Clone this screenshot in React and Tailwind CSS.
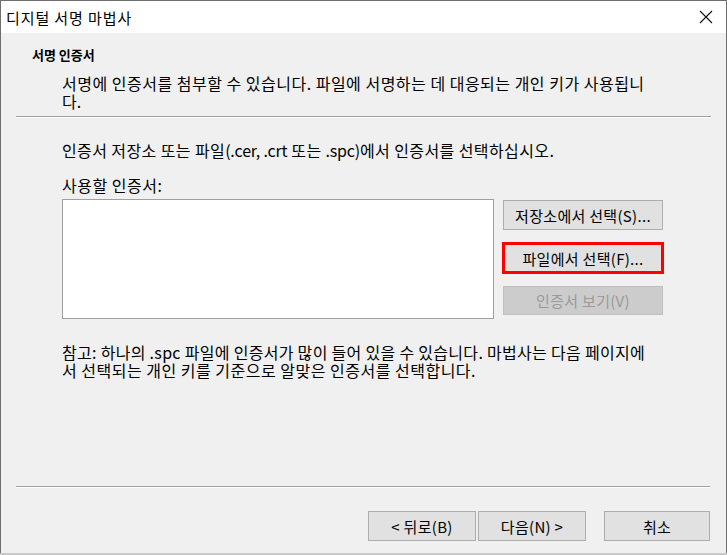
import React from 'react';

const font = { fontFamily: '"Noto Sans CJK KR", "Noto Sans", sans-serif' };

const WinButton = ({ children, disabled, className = '' }) => (
  <button
    disabled={disabled}
    className={`flex items-center justify-center border text-[15px] tracking-[0.3px] leading-none ${
      disabled
        ? 'bg-[#cccccc] border-[#bfbfbf] text-[#9a9a9a]'
        : 'bg-[#e1e1e1] border-[#adadad] text-black'
    } ${className}`}
  >
    {children}
  </button>
);

const App = () => {
  return (
    <div className="w-[727px] h-[555px] bg-[#c9c9c9] text-black" style={font}>
      <div className="h-[553px] flex flex-col border-l border-r border-t border-[#6e6e6e] bg-[#f0f0f0]">
        {/* title bar */}
        <div className="h-[32px] bg-white flex items-center justify-between pl-[5px] pr-[13px]">
          <span className="text-[15px] tracking-[0.9px] leading-none">디지털 서명 마법사</span>
          <svg width="14" height="14" viewBox="0 0 14 14">
            <path d="M1 1 L13 13 M13 1 L1 13" stroke="#111" strokeWidth="1.1" fill="none" />
          </svg>
        </div>

        {/* header */}
        <div className="pt-[13px]">
          <div className="pl-[31px] text-[13px] font-bold leading-[18px]">서명 인증서</div>
          <div className="pl-[61px] mt-[10px] text-[16px] leading-[18px]">
            <div className="tracking-[0.5px]">서명에 인증서를 첨부할 수 있습니다. 파일에 서명하는 데 대응되는 개인 키가 사용됩니</div>
            <div>다.</div>
          </div>
        </div>
        <div className="mt-[6px] ml-[15px] mr-[15px] border-t border-b border-t-[#a0a0a0] border-b-white" />

        {/* body */}
        <div className="flex-1 pl-[61px] pr-[62px]">
          <div className="mt-[23px] text-[16px] leading-[18px] tracking-[0.4px]">
            인증서 저장소 또는 파일<span className="tracking-[-0.2px]">(.cer, .crt</span> 또는{' '}
            <span className="tracking-[-0.2px]">.spc)</span>에서 인증서를 선택하십시오.
          </div>
          <div className="mt-[17px] text-[16px] leading-[18px] tracking-[0.5px]">사용할 인증서:</div>
          <div className="mt-[5px] flex gap-[9px]">
            <div className="w-[433px] h-[120px] bg-white border border-[#a0a0a0]" />
            <div className="flex flex-col pt-[1px]">
              <WinButton className="w-[160px] h-[30px]">저장소에서 선택(S)...</WinButton>
              <div className="mt-[12px] -ml-[1px] w-[162px] h-[32px] border-[3px] border-[#ff0000] bg-[#e1e1e1] flex items-center justify-center text-[15px] tracking-[0.3px] leading-none">
                파일에서 선택(F)...
              </div>
              <WinButton disabled className="mt-[12px] w-[160px] h-[29px]">인증서 보기(V)</WinButton>
            </div>
          </div>
          <div className="mt-[24px] text-[16px] leading-[18px]">
            <div className="tracking-[0.3px]">참고: 하나의 .spc 파일에 인증서가 많이 들어 있을 수 있습니다. 마법사는 다음 페이지에</div>
            <div className="tracking-[0.5px]">서 선택되는 개인 키를 기준으로 알맞은 인증서를 선택합니다.</div>
          </div>
        </div>

        {/* footer */}
        <div className="ml-[15px] mr-[16px] border-t border-b border-t-[#a0a0a0] border-b-white" />
        <div className="h-[65px] flex items-start justify-end pr-[16px] pt-[23px]">
          <WinButton className="w-[108px] h-[30px]">&lt; 뒤로(B)</WinButton>
          <WinButton className="ml-[2px] w-[108px] h-[30px]">다음(N) &gt;</WinButton>
          <WinButton className="ml-[18px] w-[106px] h-[30px]">취소</WinButton>
        </div>
      </div>
    </div>
  );
};

export default App;
